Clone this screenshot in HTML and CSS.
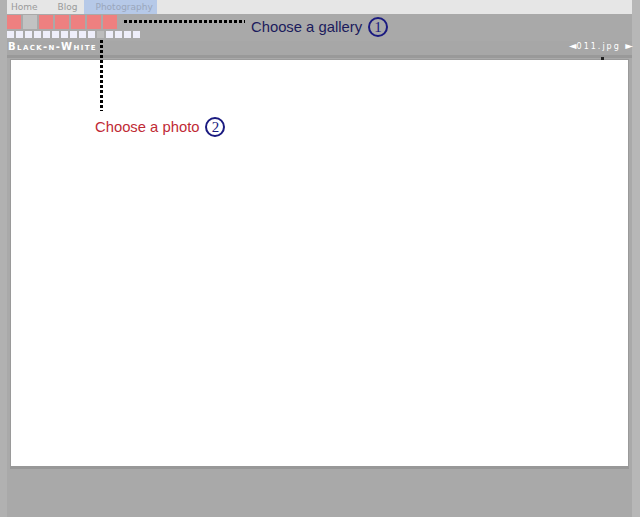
FILE: index.html
```html
<!DOCTYPE html>
<html>
<head>
<meta charset="utf-8">
<link rel="stylesheet" href="styles.css">
</head>
<body>
<div class="page">
  <nav class="nav">
    <a class="nav-link">Home</a>
    <a class="nav-link">Blog</a>
    <a class="nav-link active">Photography</a>
  </nav>
  <div class="galleries">
    <span class="gal"></span><span class="gal off"></span><span class="gal"></span><span class="gal"></span><span class="gal"></span><span class="gal"></span><span class="gal"></span>
  </div>
  <div class="thumbs">
    <span class="th"></span><span class="th"></span><span class="th"></span><span class="th"></span><span class="th"></span><span class="th"></span><span class="th"></span><span class="th"></span><span class="th"></span><span class="th"></span><span class="th off"></span><span class="th"></span><span class="th"></span><span class="th"></span><span class="th"></span>
  </div>
  <div class="titlebar">
    <span class="title">Black-n-White</span>
    <span class="pager"><span class="arr">◄</span>011.jpg <span class="arr">►</span></span>
  </div>
  <div class="stage">
    <div class="photo"></div>
  </div>
  <div class="loader"></div>
  <div class="dots-h"></div>
  <div class="dots-v"></div>
  <div class="note note-gallery">Choose a gallery <span class="circ">1</span></div>
  <div class="note note-photo">Choose a photo <span class="circ">2</span></div>
</div>
</body>
</html>
```
FILE: styles.css
```css
html, body {
  margin: 0;
  padding: 0;
}
body {
  background: #aaaaaa;
  width: 640px;
  height: 517px;
  overflow: hidden;
  font-family: "Liberation Sans", Arial, sans-serif;
}
.page {
  position: relative;
  height: 517px;
  box-sizing: border-box;
  border-left: 7px solid #b1b1b1;
  border-right: 8px solid #b7b7b7;
  background: #a9a9a9;
}
.nav {
  display: flex;
  height: 14px;
  background: #e6e6e6;
  font-family: "DejaVu Sans", Verdana, sans-serif;
  font-size: 9px;
  line-height: 15px;
  color: #9a9a9a;
  padding-left: 4px;
}
.nav-link + .nav-link {
  margin-left: 20px;
}
.nav-link.active {
  background: #b6c9e8;
  color: #9aa6bb;
  padding: 0 4px 0 11px;
  margin-left: 7px;
}
.galleries {
  display: flex;
  gap: 2px;
  padding-top: 1px;
  height: 14px;
}
.gal {
  width: 14px;
  height: 14px;
  background: #ee8080;
}
.gal.off {
  background: #c2c2c2;
}
.thumbs {
  display: flex;
  gap: 2px;
  padding-top: 2px;
  height: 7px;
}
.th {
  width: 7px;
  height: 7px;
  background: #eeeefa;
}
.th.off {
  background: #bdbdbd;
}
.titlebar {
  display: flex;
  justify-content: space-between;
  align-items: center;
  margin-top: 3px;
  height: 14px;
  background: #a7a7a7;
  border-bottom: 3px solid #999999;
  padding: 0 0 0 1px;
}
.title {
  font-family: "DejaVu Sans", Verdana, sans-serif;
  font-weight: bold;
  font-variant: small-caps;
  font-size: 10px;
  letter-spacing: 1.4px;
  color: #ffffff;
  line-height: 14px;
  margin-top: -2px;
}
.pager {
  font-family: "DejaVu Sans", Verdana, sans-serif;
  font-size: 8px;
  color: #ffffff;
  letter-spacing: 2px;
  line-height: 14px;
  margin-top: -4px;
  margin-right: -1px;
}
.arr {
  font-size: 10px;
  letter-spacing: 0;
}
.stage {
  margin: 1px 3px 0 3px;
  border: 1px solid #9a9a9a;
  border-bottom: 3px solid #989898;
}
.photo {
  height: 406px;
  background: #ffffff;
}
.loader {
  position: absolute;
  left: 594px;
  top: 57px;
  width: 3px;
  height: 3px;
  background: #222;
}
.dots-h {
  position: absolute;
  left: 117px;
  top: 20px;
  width: 121px;
  height: 3px;
  background: repeating-linear-gradient(90deg, #000 0 3px, transparent 3px 5px);
}
.dots-v {
  position: absolute;
  left: 93px;
  top: 40px;
  width: 3px;
  height: 71px;
  background: repeating-linear-gradient(180deg, #000 0 3px, transparent 3px 5px);
}
.note {
  position: absolute;
  font-size: 14.8px;
  line-height: 20px;
  white-space: nowrap;
  display: flex;
  align-items: center;
}
.note-gallery {
  left: 244px;
  top: 17px;
  color: #1b1b5c;
}
.note-photo {
  left: 88px;
  top: 117px;
  color: #c02a35;
}
.circ {
  display: inline-flex;
  align-items: center;
  justify-content: center;
  width: 20px;
  height: 20px;
  border: 2px solid #1a1a80;
  border-radius: 50%;
  color: #1a1a80;
  font-family: "Liberation Serif", serif;
  font-size: 15px;
  margin-left: 6px;
  box-sizing: border-box;
}
```
